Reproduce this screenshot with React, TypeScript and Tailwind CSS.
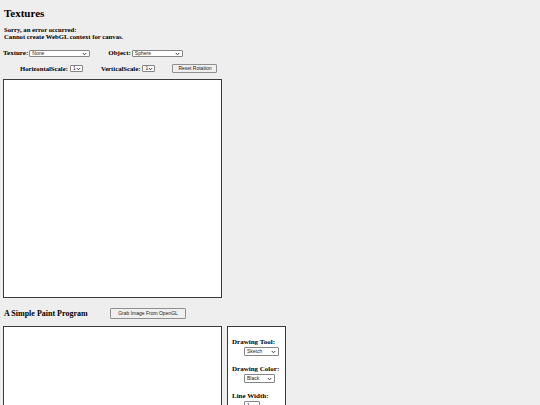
import React from 'react';

// Small fake select box: a bordered field with the current value and a chevron
function Pick({ value, w }: { value: string; w: string }) {
  return (
    <div
      className={`${w} h-[7px] flex items-center justify-between bg-white border border-[#858585] rounded-[1px] pl-[2px] pr-[2px] text-[5px] leading-none text-[#222] font-['Liberation_Sans',sans-serif] font-normal`}
    >
      <span>{value}</span>
      <svg width="5" height="4" viewBox="0 0 10 8" className="shrink-0">
        <path d="M1.5 2 L5 5.5 L8.5 2" fill="none" stroke="#222" strokeWidth="1.8" />
      </svg>
    </div>
  );
}

function Btn({ label, w }: { label: string; w: string }) {
  return (
    <div
      className={`${w} h-[9px] flex items-center justify-center bg-[#efefef] border border-[#8f8f8f] rounded-[1px] text-[5px] leading-none text-[#222] font-['Liberation_Sans',sans-serif] font-normal`}
    >
      {label}
    </div>
  );
}

export default function App() {
  return (
    <div className="w-[540px] h-[405px] overflow-hidden bg-[#eeeeee] text-black font-['Liberation_Serif',serif] font-bold">
      <div className="pt-[7px] pl-[4px]">
        <h1 className="text-[11px] leading-[13px] font-bold">Textures</h1>
        <div className="mt-[6px] text-[6.7px] leading-[7px]">
          <div>Sorry, an error occurred:</div>
          <div>Cannot create WebGL context for canvas.</div>
        </div>
      </div>

      {/* texture / object pickers */}
      <div className="mt-[10px] flex items-center text-[7px] leading-[7px] pl-[3px]">
        <span className="mr-[1px]">Texture:</span>
        <Pick value="None" w="w-[61px]" />
        <span className="ml-[18px] mr-[1px]">Object:</span>
        <Pick value="Sphere" w="w-[51px]" />
      </div>

      <div className="mt-[7px] flex items-center text-[6.7px] leading-[7px] pl-[20px]">
        <span className="mr-[2px]">HorizontalScale:</span>
        <Pick value="1" w="w-[13px]" />
        <span className="ml-[18px] mr-[2px]">VerticalScale:</span>
        <Pick value="1" w="w-[13px]" />
        <div className="ml-[17px]">
          <Btn label="Reset Rotation" w="w-[45px]" />
        </div>
      </div>

      {/* 3D view */}
      <div className="mt-[6px] ml-[3px] w-[219px] h-[219px] bg-white border border-[#3a3a3a]" />

      <div className="mt-[10px] flex items-center pl-[4px]">
        <h2 className="w-[106px] text-[8px] leading-[11px] font-bold">A Simple Paint Program</h2>
        <Btn label="Grab Image From OpenGL" w="w-[76px] !h-[11px]" />
      </div>

      {/* paint area + tools */}
      <div className="mt-[7px] ml-[3px] flex gap-[5px]">
        <div className="w-[219px] h-[200px] bg-white border border-[#3a3a3a]" />
        <div className="w-[59px] h-[200px] bg-white border border-[#3a3a3a] pt-[11px] pl-[4px] text-[7px] leading-[8px]">
          <div>Drawing Tool:</div>
          <div className="mt-[1px] ml-[12px]">
            <Pick value="Sketch" w="w-[35px] !h-[9px]" />
          </div>
          <div className="mt-[9px]">Drawing Color:</div>
          <div className="mt-[1px] ml-[12px]">
            <Pick value="Black" w="w-[31px] !h-[9px]" />
          </div>
          <div className="mt-[9px]">Line Width:</div>
          <div className="mt-[1px] ml-[12px]">
            <Pick value="1" w="w-[16px] !h-[9px]" />
          </div>
        </div>
      </div>
    </div>
  );
}
